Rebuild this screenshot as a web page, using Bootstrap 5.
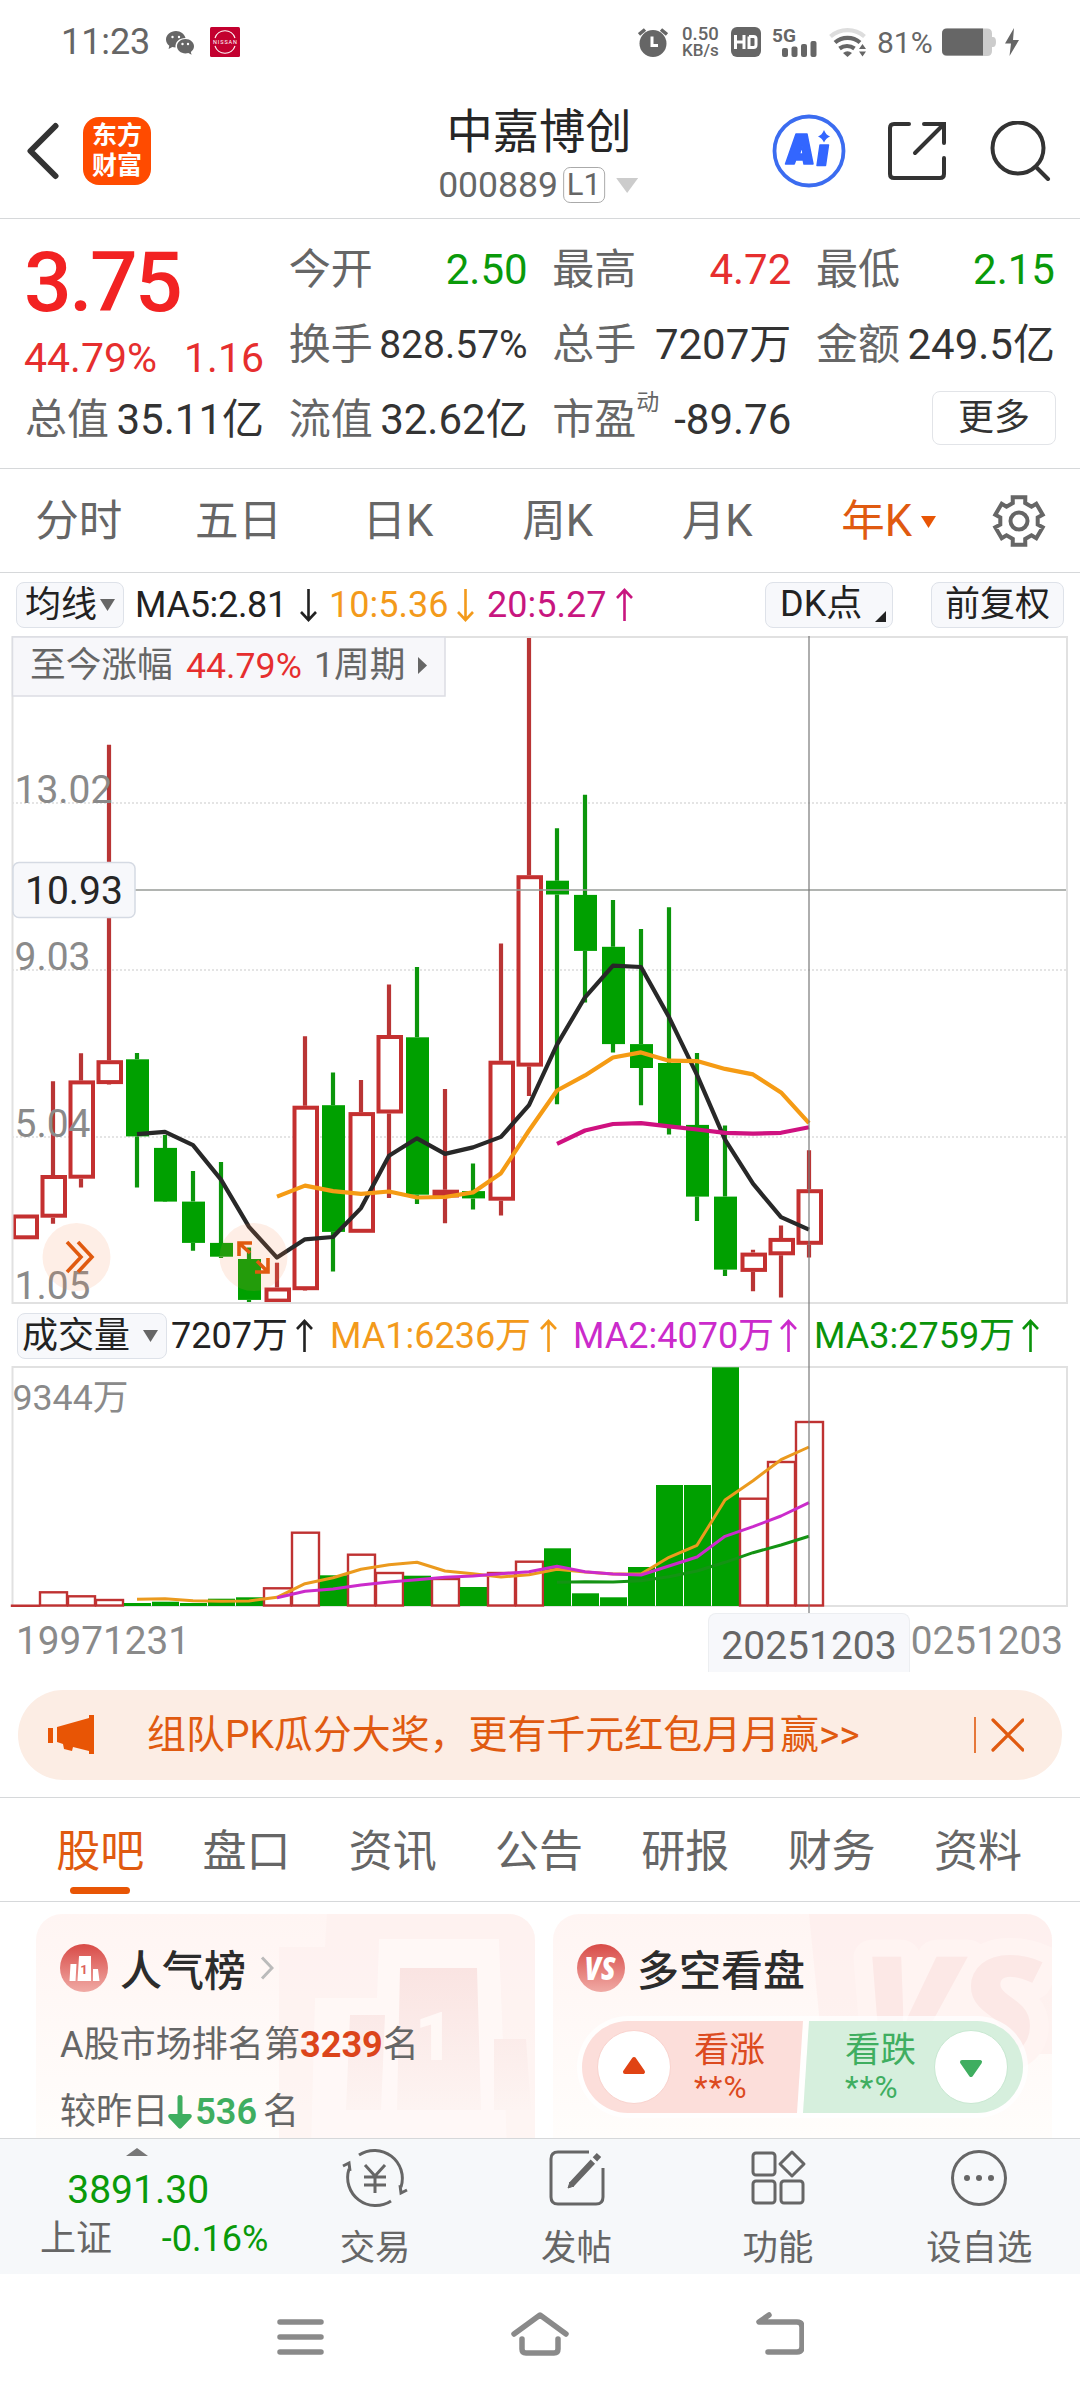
<!DOCTYPE html>
<html lang="zh-CN">
<head>
<meta charset="utf-8">
<meta name="viewport" content="width=device-width, initial-scale=1">
<title>中嘉博创 000889</title>
<link href="https://cdn.jsdelivr.net/npm/bootstrap@5.3.0/dist/css/bootstrap.min.css" rel="stylesheet">
<style>
:root{--ink:#333;--mute:#666;--dim:#8a8a8a;--up:#e62e2e;--down:#0a9a0a;--brand:#e05a10;--hair:#d6d8da}
body{font-family:Roboto,"Noto Sans CJK SC",sans-serif;color:var(--ink);background:#fff;width:1080px;height:2400px;overflow:hidden;line-height:1}
svg{display:block;flex:none}
.hair-b{border-bottom:1px solid var(--hair)}
.c-up{color:var(--up)}.c-down{color:var(--down)}.c-mute{color:var(--mute)}.c-brand{color:var(--brand)}
.statusbar{height:84px;padding:0 61px 0 61px;color:var(--mute)}
.clock{font-size:36px;width:105px;letter-spacing:-.1px}
.speed{width:49px;font-weight:500;font-size:18.500px;line-height:16px}
.speed div{height:16px}
.apphead{height:135px;padding:0 28px 0 26px}
.logo{width:68px;height:68px;border-radius:16px;background:#ff4b00;color:#fff;font-weight:700;font-size:25px;line-height:30px}
.stockhead{top:22px;margin-left:-1px}
.stockname{font-size:46.3px;line-height:52px;color:#262626}
.code{font-size:35.5px;color:var(--mute);line-height:38px}
.lvl{border:1.5px solid #aaa;border-radius:7px;width:42px;height:36px;font-size:31px;line-height:34px;text-align:center}
.quote{height:250px;padding:13px 25px 0;font-size:42px}
.qcol{width:239px}
.qrow{height:75px;padding-top:1px}
.price{height:100px;line-height:102px;font-size:84px;font-weight:500;letter-spacing:-2.6px;color:#f22222;margin-left:-1px}
.pct{height:50px;padding-top:2px;font-size:41px;margin-left:-1px}
.fit{font-size:39px}
.sup{font-size:23px;align-self:flex-start;margin-top:8px}
.more{width:124px;height:54px;border:1.5px solid #e2e4e8;border-radius:8px;font-size:36px;margin:-4px -1px 0 0}
.tabbar{height:104px;font-size:43.5px;color:var(--mute)}
.tabbar>a{width:159.6px;padding-top:2px;margin-left:-1px;margin-right:1px;text-align:center;color:inherit;text-decoration:none}
.tabbar>a.on{color:var(--brand)}
.tabbar .tri{display:inline-block;vertical-align:middle;margin:-4px -24px 0 9px}
.legend-row{height:63px;font-size:36px;padding-left:16px;color:#222}
.chip{background:#f7f8fb;border:1.5px solid #dee2e9;border-radius:8px;height:46px;font-size:36px;color:#222;white-space:nowrap;flex:none}
.legend-row span{white-space:nowrap;flex:none}
.stage{position:relative}
.cross-v{position:absolute;left:808px;top:63px;width:2px;height:978px;background:rgba(120,120,120,.6)}
.dates{height:83px;font-size:38.7px;color:var(--dim);padding:14px 17px 0 16px;line-height:40px}
.datepick{position:absolute;left:708px;top:1040px;width:202px;height:59px;background:#f7f8fb;border:1px solid #eceef1;border-bottom:0;border-radius:8px 8px 0 0;font-size:39px;color:var(--mute);line-height:64px;text-align:center}
.promo{height:90px;margin:0 18px;border-radius:45px;background:#fcede4;font-size:38.95px;padding:0 38px 0 30px}
.subtabs{height:105px;margin-top:17px;border-top:1px solid var(--hair);padding:0 28px 0 27px;font-size:44px;color:var(--mute)}
.subtabs>a{color:inherit;text-decoration:none;width:146.3px;height:103px;line-height:108px;text-align:center;position:relative}
.subtabs>a.on{color:var(--brand)}
.subtabs>a.on::after{content:"";position:absolute;left:43px;bottom:7px;width:60px;height:7px;border-radius:4px;background:#e85505}
.feed{height:236px;padding:12px 28px 0 36px;overflow:hidden;gap:18px}
.tile{width:499px;height:260px;border-radius:26px;background:linear-gradient(#fff5f3,#fffdfb 85%);position:relative;overflow:hidden;flex:none}
.tile>.art{position:absolute;left:0;top:0}
.tile>.inner{position:relative;padding:29px 24px}
.tile h2{font-size:42px;line-height:50px;font-weight:500;margin:0;padding-top:4px;height:50px;color:#2c2c2c}
.rank{font-size:36.1px;color:var(--mute);height:50px;line-height:51px;white-space:nowrap}
.rank b{font-weight:700}
.vote{position:absolute;left:29px;top:107px;width:441px;height:92px}
.vote .word{position:absolute;top:7px;font-size:35.5px;line-height:44px}
.vote .word small{display:block;font-size:31.5px;line-height:31px;letter-spacing:1.2px}
.dock{height:136px;background:#f6f8fa;border-top:1px solid var(--hair);color:var(--mute)}
.dock .cell{width:201.5px;font-size:35.4px}
.dock .cell svg{margin-top:7px}
.dock .cell div{line-height:40px;margin-top:18px}
.idx{width:274.5px;padding-top:9px}
.sysnav{height:126px;padding:37px 0 0}
</style>
</head>
<body>
<div class="statusbar d-flex align-items-center">
  <span class="clock">11:23</span>
  <svg width="28" height="25" viewBox="0 0 28 25" fill="#666"><path d="M10 1C4.500 1 0 4.700 0 9.500c0 2.600 1.300 4.800 3.300 6.300L2.600 19l3.700-1.900c1 .3 2 .4 3.200.4C9 12 13 8 19.500 8 18.500 4 14.600 1 10 1z"/><path d="M19.500 9c-4.800 0-8.500 3.300-8.500 7.200s3.700 7.200 8.500 7.200c1 0 2-.1 2.900-.4l3.200 1.700-.8-2.800c1.900-1.300 3.200-3.300 3.200-5.700 0-3.900-3.700-7.200-8.500-7.200z"/><g fill="#fff"><circle cx="6.500" cy="7" r="1.200"/><circle cx="13" cy="7" r="1.200"/><circle cx="16.500" cy="14" r="1.200"/><circle cx="22" cy="14" r="1.200"/></g></svg>
  <svg class="ms-3" width="30" height="30" viewBox="0 0 30 30"><rect width="30" height="30" rx="1.500" fill="#c3002f"/><g fill="none" stroke="#fff" stroke-width="1.100"><path d="M5 11a10.500 10.500 0 0 1 20 0M5 19a10.500 10.500 0 0 0 20 0"/></g><text x="15" y="17" font-size="5.500" fill="#fff" text-anchor="middle" textLength="24">NISSAN</text></svg>
  <div class="d-flex align-items-center ms-auto">
    <svg width="30" height="30" viewBox="0 0 30 30" fill="#666"><circle cx="15" cy="16.500" r="13.500"/><path d="M1 7.500 7 2.500M29 7.500 23 2.500" stroke="#666" stroke-width="3.500"/><path d="M14 9.500v9h6" fill="none" stroke="#fff" stroke-width="3"/></svg>
    <div class="speed" style="margin-left:14px"><div>0.50</div><div style="font-size:17px">KB/s</div></div>
    <svg width="30" height="30" viewBox="0 0 30 30"><rect width="30" height="30" rx="6" fill="#666"/><path d="M4.500 8v14M13 8v14M4.500 15H13M18 9.500v11h4.500q2.500 0 2.500-2.500v-6q0-2.500-2.500-2.500H18" fill="none" stroke="#fff" stroke-width="3"/></svg>
    <svg width="46" height="30" viewBox="0 0 46 30" style="margin-left:11px;overflow:visible" fill="#666"><text x="0" y="14.500" font-size="19" font-weight="700" textLength="24">5G</text><rect x="10" y="21" width="6" height="9" rx="2"/><rect x="19.500" y="19.500" width="6" height="10.500" rx="2"/><rect x="29" y="17" width="6" height="13" rx="2"/><rect x="38.500" y="14" width="6" height="16" rx="2"/></svg>
    <svg width="38" height="30" viewBox="0 0 38 30" style="margin-left:11px" fill="none" stroke-width="4.200"><path d="M1.500 9.500a26 26 0 0 1 34 0" stroke="#ddd"/><path d="M6 15.500a19 19 0 0 1 25 0M10.500 21.500a13 13 0 0 1 15 0" stroke="#666"/><path d="M14 26q4.500-3.500 9 0l-4.500 4z" fill="#666"/><path d="M30 22l3.500-5 3.500 5zM30 24.500l3.500 5 3.500-5z" fill="#666"/></svg>
    <span style="font-size:30px;margin-left:10px;width:65px;padding-top:1px">81%</span>
    <svg width="54" height="28" viewBox="0 0 54 28"><path d="M5 .5h40q5 0 5 5V9h1q3 0 3 5t-3 5h-1v4q0 5-5 5H5q-5 0-5-5V5.500q0-5 5-5z" fill="#ccc"/><path d="M5 .5h36v27H5q-5 0-5-5v-17q0-5 5-5z" fill="#666"/></svg>
    <svg class="ms-2" width="16" height="28" viewBox="0 0 16 28" style="margin-right:-1px"><path d="M10 0 1 15.500h6L5.500 28 15 12H9z" fill="#666"/></svg>
  </div>
</div>

<header class="apphead hair-b d-flex align-items-center position-relative">
  <svg width="34" height="58" viewBox="0 0 34 58"><path d="M29.500 4 4.500 29l25 25" fill="none" stroke="#333" stroke-width="6" stroke-linecap="round" stroke-linejoin="round"/></svg>
  <div class="logo d-flex flex-column align-items-center justify-content-center" style="margin-left:23px"><div>东方</div><div>财富</div></div>
  <div class="stockhead position-absolute start-50 translate-middle-x text-center">
    <div class="stockname">中嘉博创</div>
    <div class="code d-flex align-items-center" style="margin-top:8px;margin-left:-2px"><span>000889</span><span class="lvl" style="margin-left:5px">L1</span><svg width="22" height="15" style="margin-left:11px"><path d="M0 0h22L11 15z" fill="#ccc"/></svg></div>
  </div>
  <div class="d-flex align-items-center ms-auto">
    <svg width="74" height="74" viewBox="0 0 74 74"><circle cx="37" cy="37" r="34.500" fill="none" stroke="#3b6cf0" stroke-width="3.800"/><path d="M24 20h11l6 30h-9l-.8-4h-7.500l-1.500 4H13.500zM27.500 40h3.500l-1-8zM48 31h8.500l-3 20.500h-8.500z" fill="#3366ff" stroke="#3366ff" stroke-width="1.500" stroke-linejoin="round"/><path d="M52 16q2 5 6 6.500-4 1.500-6 6-2-4.500-6-6 4-1.500 6-6.500z" fill="#3366ff"/></svg>
    <svg width="60" height="60" viewBox="0 0 60 60" style="margin-left:41px" fill="none" stroke="#333" stroke-width="4" stroke-linecap="round"><path d="M22 3H7q-4 0-4 4v46q0 4 4 4h46q4 0 4-4V37M37 3h20v19M56 4 28 32"/></svg>
    <svg width="62" height="60" viewBox="0 0 62 60" style="margin-left:42px;margin-right:1px" fill="none" stroke="#333" stroke-width="4" stroke-linecap="round"><circle cx="29" cy="27" r="25.500"/><path d="M47 46 59 58"/></svg>
  </div>
</header>

<section class="quote hair-b d-flex justify-content-between">
  <div class="qcol">
    <div class="price">3.75</div>
    <div class="pct c-up d-flex justify-content-between align-items-center"><span>44.79%</span><span>1.16</span></div>
    <div class="qrow d-flex justify-content-between align-items-center"><span class="c-mute">总值</span><span>35.11亿</span></div>
  </div>
  <div class="qcol">
    <div class="qrow d-flex justify-content-between align-items-center"><span class="c-mute">今开</span><span class="c-down">2.50</span></div>
    <div class="qrow d-flex justify-content-between align-items-center"><span class="c-mute">换手</span><span class="fit">828.57%</span></div>
    <div class="qrow d-flex justify-content-between align-items-center"><span class="c-mute">流值</span><span>32.62亿</span></div>
  </div>
  <div class="qcol">
    <div class="qrow d-flex justify-content-between align-items-center"><span class="c-mute">最高</span><span class="c-up">4.72</span></div>
    <div class="qrow d-flex justify-content-between align-items-center"><span class="c-mute">总手</span><span>7207万</span></div>
    <div class="qrow d-flex align-items-center"><span class="c-mute">市盈</span><span class="sup c-mute">动</span><span class="ms-auto">-89.76</span></div>
  </div>
  <div class="qcol">
    <div class="qrow d-flex justify-content-between align-items-center"><span class="c-mute">最低</span><span class="c-down">2.15</span></div>
    <div class="qrow d-flex justify-content-between align-items-center"><span class="c-mute">金额</span><span>249.5亿</span></div>
    <div class="qrow d-flex justify-content-end align-items-center"><span class="more d-flex align-items-center justify-content-center">更多</span></div>
  </div>
</section>

<nav class="tabbar hair-b d-flex align-items-center">
  <a>分时</a><a>五日</a><a>日K</a><a>周K</a><a>月K</a><a class="on">年K<svg class="tri" width="15" height="12"><path d="M0 0h15L7.500 12z" fill="#e85505"/></svg></a>
  <svg width="54" height="54" viewBox="-27 -27 54 54" style="margin-left:34px" fill="none" stroke="#666" stroke-width="4"><path id="gear" stroke-linejoin="miter"/><circle r="8.500"/></svg>
</nav>

<div class="stage">
  <div class="legend-row d-flex align-items-center">
    <span class="chip d-flex align-items-center" style="width:108px;padding-left:8px">均线<svg width="15" height="12" style="margin-left:3px"><path d="M0 0h15L7.500 12z" fill="#666"/></svg></span>
    <span style="margin-left:11px;width:165px;letter-spacing:-.3px">MA5:2.81</span><svg width="17" height="34" viewBox="0 0 17 34"><use href="#dn"/></svg>
    <span style="margin-left:12px;width:128px;color:#f39a1b">10:5.36</span><svg width="17" height="34" viewBox="0 0 17 34" color="#f39a1b"><use href="#dn"/></svg>
    <span style="margin-left:13px;width:129px;color:#c8167f">20:5.27</span><svg width="17" height="34" viewBox="0 0 17 34" color="#c8167f"><use href="#upa"/></svg>
    <span class="chip position-relative" style="width:128px;margin-left:132px;padding-left:14px;line-height:43px">DK点<svg class="position-absolute" style="right:6px;bottom:5px" width="11" height="11"><path d="M11 0v11H0z" fill="#222"/></svg></span>
    <span class="chip text-center" style="width:133px;margin-left:38px;line-height:44px;font-size:35px">前复权</span>
  </div>

  <svg id="kline" width="1080" height="668" viewBox="0 0 1080 668">
    <g id="kgrid" stroke="#dcdcdc" stroke-width="1.500" stroke-dasharray="2 2"><path d="M12 167H1067M12 334H1067M12 501H1067"/></g>
    <g id="candles"></g>
    <g fill="none" stroke-width="4.200" stroke-linejoin="round"><polyline id="ma5" stroke="#282828"/><polyline id="ma10" stroke="#f59b14"/><polyline id="ma20" stroke="#cf1180"/></g>
    <g font-size="39" fill="#8a8a8a"><text x="14.500" y="167">13.02</text><text x="14.500" y="334">9.03</text><text x="14.500" y="501">5.04</text><text x="14.500" y="663">1.05</text></g>
    <path d="M135 254H1067" stroke="#979b97" stroke-width="1.600"/>
    <rect x="12.500" y="1" width="1054.500" height="666" fill="none" stroke="#e1e1e1" stroke-width="2"/>
    <rect x="13" y="226.500" width="122" height="55" rx="6" fill="#f7f8fb" stroke="#d5dae3" stroke-width="1.500"/>
    <text x="25" y="267.500" font-size="39" fill="#262626">10.93</text>
    <g><rect x="12.500" y="1" width="432.500" height="59" fill="#f7f7fa" stroke="#dcdde3" stroke-width="1.500"/><text x="30" y="41" font-size="35.700" fill="#666">至今涨幅</text><text x="186" y="41.500" font-size="35.700" fill="#e62e2e">44.79%</text><text x="314" y="41" font-size="35.700" fill="#666">1周期</text><path d="M418 21v17l9-8.500z" fill="#666"/></g>
    <g fill="none" stroke="#e05a10" stroke-width="3.600"><circle cx="76.500" cy="621" r="34" fill="#fb8a50" fill-opacity=".14" stroke="none"/><path d="M67 606l14 15-14 15M78 606l14 15-14 15"/><circle cx="253.500" cy="621" r="34" fill="#fb8a50" fill-opacity=".14" stroke="none"/><path d="M239 620v-13h13M239 607l11 10M268 622v14h-13M268 636l-11-11"/></g>
  </svg>

  <div class="legend-row d-flex align-items-center" style="height:62px;padding:2px 0 0 17px">
    <span class="chip d-flex align-items-center" style="width:150px;padding-left:4px">成交量<svg width="15" height="12" style="margin-left:13px"><path d="M0 0h15L7.500 12z" fill="#666"/></svg></span>
    <span style="margin-left:4px;width:125px">7207万</span><svg width="17" height="36" viewBox="0 0 17 34"><use href="#upa"/></svg>
    <span style="margin-left:17px;width:210px;color:#f39a1b">MA1:6236万</span><svg width="17" height="36" viewBox="0 0 17 34" color="#f39a1b"><use href="#upa"/></svg>
    <span style="margin-left:16px;width:207px;color:#cb2bcb">MA2:4070万</span><svg width="17" height="36" viewBox="0 0 17 34" color="#cb2bcb"><use href="#upa"/></svg>
    <span style="margin-left:17px;width:208px;color:#0a930a">MA3:2759万</span><svg width="17" height="36" viewBox="0 0 17 34" color="#0a930a"><use href="#upa"/></svg>
  </div>

  <svg id="volume" width="1080" height="241" viewBox="0 0 1080 241">
    <rect x="12.500" y="1" width="1054.500" height="239" fill="none" stroke="#e1e1e1" stroke-width="2"/>
    <text x="12.500" y="43.500" font-size="35.700" fill="#8a8a8a">9344万</text>
    <g id="bars"></g>
    <g fill="none" stroke-width="3" stroke-linejoin="round"><polyline id="v3" stroke="#149314"/><polyline id="v1" stroke="#eb9a1e"/><polyline id="v2" stroke="#cb2bcb"/></g>
  </svg>
  <div class="dates d-flex justify-content-between"><span>19971231</span><span>20251203</span></div>
  <div class="cross-v"></div>
  <div class="datepick">20251203</div>
</div>

<div class="promo d-flex align-items-center c-brand">
  <svg width="46" height="40" viewBox="0 0 46 40" fill="#e85505"><path d="M0 13h5v15H0zM9 12 41 3V0h5v39h-5v-3l-16-4-1 4-8-2-1-5-6-2z"/></svg>
  <span class="text-nowrap" style="margin-left:53px">组队PK瓜分大奖，更有千元红包月月赢&gt;&gt;</span>
  <svg class="ms-auto" width="50" height="36" viewBox="0 0 50 36" stroke="#e05a10"><path d="M1 0v36" stroke-width="1.600"/><path d="M19 3l30 30M49 3 19 33" stroke-width="3.200" stroke-linecap="round"/></svg>
</div>

<nav class="subtabs hair-b d-flex"><a class="on">股吧</a><a>盘口</a><a>资讯</a><a>公告</a><a>研报</a><a>财务</a><a>资料</a></nav>

<section class="feed d-flex">
  <div class="tile">
    <svg class="art" width="499" height="260" viewBox="0 0 499 260">
      <path d="M291 0H499V232H243V33h46z" fill="#fdeeec" opacity=".55"/>
      <path d="M343 25h120l8 207H275l4-148h62z" fill="#fff9f7" opacity=".8"/>
      <path d="M364 54h77l4 142H361zM314 101h35l-4 95h-35zM458 125h32l5 71h-37z" fill="url(#podium)"/>
      <text x="379" y="146" font-size="66" font-weight="900" fill="#fff8f6">1</text>
    </svg>
    <div class="inner">
      <div class="d-flex align-items-center">
        <svg width="48" height="48" viewBox="0 0 48 48"><circle cx="24" cy="24" r="24" fill="url(#badge)"/><path d="M19 12h12v25H17.500zM10.500 20h6l-1 17h-6zM33 25h5l1.500 12H33z" fill="#fff"/><text x="24" y="30" font-size="13" font-weight="700" text-anchor="middle" fill="#dd625c">1</text></svg>
        <h2 style="margin-left:12px">人气榜</h2>
        <svg width="14" height="24" viewBox="0 0 14 24" style="margin-left:14px"><path d="M2 1.500 12 12 2 22.500" fill="none" stroke="#bbb" stroke-width="3"/></svg>
      </div>
      <div class="rank" style="margin-top:27px">A股市场排名第<b style="color:#dc451b">3239</b>名</div>
      <div class="rank d-flex align-items-center" style="margin-top:17px">较昨日<svg width="24" height="34" viewBox="0 0 24 34" style="margin:0 3px 0 0"><path d="M9.500 2q0-2 2.500-2t2.500 2v17H22q3 1 1 4L13.500 33q-1.500 1.500-3 0L1 23q-2-3 1-4h7.500z" fill="#3fae60"/></svg><b style="color:#3fae60;font-weight:600">536</b><span style="margin-left:6px">名</span></div>
    </div>
  </div>
  <div class="tile">
    <svg class="art" width="499" height="260" viewBox="0 0 499 260">
      <path d="M256 0H499V140H270z" fill="#fdeceb" opacity=".6"/>
      <g font-family="Open Sans,sans-serif" font-weight="800" font-style="italic" font-size="140"><text x="308" y="143" fill="#fce8e6" stroke="#fff4f2" stroke-width="34" paint-order="stroke" stroke-linejoin="round" textLength="180" lengthAdjust="spacingAndGlyphs">VS</text></g>
    </svg>
    <div class="inner d-flex align-items-center">
      <svg width="48" height="48" viewBox="0 0 48 48"><circle cx="24" cy="24" r="24" fill="url(#badge)"/><text x="23" y="35.500" font-family="Open Sans,sans-serif" font-size="31" font-weight="800" font-style="italic" text-anchor="middle" fill="#fff" textLength="31" lengthAdjust="spacingAndGlyphs">VS</text></svg>
      <h2 style="margin-left:12px">多空看盘</h2>
    </div>
    <div class="vote">
      <svg width="441" height="92" viewBox="0 0 441 92" overflow="visible"><rect x="-5" y="-5" width="451" height="102" rx="51" fill="#fff" opacity=".75"/><path d="M46 0h175l-6 92H46A46 46 0 0 1 46 0z" fill="#fcdeda"/><path d="M227 0h168a46 46 0 0 1 0 92H221z" fill="#d6efdd"/><circle cx="52" cy="46" r="36.500" fill="#fff" stroke="#f9d3ce"/><circle cx="389" cy="46" r="36.500" fill="#fff" stroke="#c8e8d1"/><path d="M52 38 61 51H43z" fill="#e04314" stroke="#e04314" stroke-width="4" stroke-linejoin="round"/><path d="M389 54l9-13h-18z" fill="#3fae60" stroke="#3fae60" stroke-width="4" stroke-linejoin="round"/></svg>
      <div class="word" style="left:112px;color:#dc4a20">看涨<small>**%</small></div>
      <div class="word" style="left:263px;color:#3fae60">看跌<small>**%</small></div>
    </div>
  </div>
</section>

<footer class="dock d-flex">
  <div class="idx">
    <svg class="mx-auto" width="22" height="8"><path d="M0 8 11 0l11 8z" fill="#777"/></svg>
    <div class="c-down text-center" style="font-size:39px;line-height:44px;margin-top:12px;padding-left:2px">3891.30</div>
    <div class="d-flex justify-content-between align-items-center" style="font-size:36px;line-height:40px;margin-top:7px;padding:0 6px 0 40px"><span>上证</span><span class="c-down">-0.16%</span></div>
  </div>
  <div class="cell d-flex flex-column align-items-center"><svg width="66" height="64" viewBox="-33 -32 66 64" fill="none" stroke="#666" stroke-width="3"><path d="M-16-23A28 28 0 0 1 26 9M16 23A28 28 0 0 1-26-9M-32-12l6-3 1 8M32 12l-6 3-1-8M-10-13 0-2l10-11M0-2v17M-11-1h22M-11 7h22"/></svg><div>交易</div></div>
  <div class="cell d-flex flex-column align-items-center"><svg width="66" height="64" viewBox="-34 -32 66 64" fill="none" stroke="#666" stroke-width="3"><path d="M12-26h-31q-7 0-7 7v38q0 7 7 7h38q7 0 7-7V-10"/><path d="M22-23-6 7" stroke-width="6" stroke-dasharray="6 3 60"/><path d="M-9 10l2-6 4 4z" fill="#666" stroke-width="1"/></svg><div>发帖</div></div>
  <div class="cell d-flex flex-column align-items-center"><svg width="66" height="64" viewBox="-33 -32 66 64" fill="none" stroke="#666" stroke-width="3" stroke-linejoin="round"><rect x="-25" y="-25" width="22" height="22" rx="3"/><rect x="-25" y="3" width="22" height="22" rx="3"/><rect x="3" y="3" width="22" height="22" rx="3"/><path d="M14-26 26-14 14-2 2-14z"/></svg><div>功能</div></div>
  <div class="cell d-flex flex-column align-items-center"><svg width="66" height="64" viewBox="-33 -32 66 64"><circle r="26.500" fill="none" stroke="#666" stroke-width="3"/><g fill="#666"><circle cx="-12" r="3"/><circle r="3"/><circle cx="12" r="3"/></g></svg><div>设自选</div></div>
</footer>

<div class="sysnav d-flex justify-content-center">
  <svg width="528" height="46" viewBox="276 2311 528 46" fill="none" stroke="#8a8a8a" stroke-width="5.500" stroke-linecap="round" stroke-linejoin="round"><path d="M280 2322h41M280 2337h41M280 2352h41M514 2334l26-19 26 19M522 2339v10q0 4 4 4h28q4 0 4-4v-10M769 2315l-10 7h38q5 0 5 5v20q0 5-5 5h-29"/></svg>
</div>

<svg width="0" height="0" class="position-absolute"><defs>
  <g id="dn" fill="none" stroke="currentColor" stroke-width="2.600"><path d="M8.500 1v31M1 24l7.500 8 7.500-8"/></g>
  <g id="upa" fill="none" stroke="currentColor" stroke-width="2.600"><path d="M8.500 33V2M1 10l7.500-8 7.500 8"/></g>
  <linearGradient id="badge" x2="0" y2="1"><stop stop-color="#d84b47"/><stop offset="1" stop-color="#f0aaa5"/></linearGradient>
  <linearGradient id="podium" x2="0" y2="1"><stop stop-color="#fae4e2"/><stop offset="1" stop-color="#fdf4f2"/></linearGradient>
</defs></svg>

<script src="https://cdn.jsdelivr.net/npm/bootstrap@5.3.0/dist/js/bootstrap.bundle.min.js"></script>
<script>
const X = i => 25 + 28 * i;
const Y = v => +(v / 2.178 - 6).toFixed(1);
const V = v => +(v / 3 - 66).toFixed(1);
const line = (id, start, f, vals) =>
  document.getElementById(id).setAttribute('points', vals.map((v, k) => X(start + k) + ',' + f(v)).join(' '));

// [rising, high, body top, body bottom, low] for each year
const K = [[1,1273,1273,1327,1327],[1,983,1187,1280,1293],[1,922,981,1195,1214],[1,250,937,989,990],[0,921,935,1103,1214],
[0,1100,1128,1245,1246],[0,1178,1245,1335,1352],[0,1159,1335,1365,1368],[0,1345,1370,1459,1467],[1,1378,1432,1465,1465],
[1,885,1036,1438,1439],[0,964,1035,1311,1397],[1,980,1050,1313,1313],[1,772,882,1053,1237],[0,734,887,1230,1250],
[1,1000,1219,1236,1292],[0,1162,1222,1238,1262],[1,683,938,1243,1275],[1,13,534,951,1015],[0,432,546,576,1033],
[0,359,577,699,811],[0,588,690,902,920],[0,651,902,954,1035],[0,604,943,1080,1099],[0,921,1078,1234,1287],
[0,1079,1234,1393,1407],[1,1350,1356,1398,1440],[1,1297,1324,1362,1454],[1,1133,1218,1339,1367]];
document.getElementById('candles').innerHTML = K.map(([up, h, t, b, l], i) => {
  const x = X(i), c = up ? '#c43030' : '#00a000';
  const wick = `<path d="M${x} ${Y(h)}V${Y(t)}M${x} ${Y(b)}V${Y(l)}" stroke="${up ? '#b93535' : '#0b960b'}" stroke-width="4.200"/>`;
  const left = i ? x - 10.5 : 14;
  return wick + (up
    ? `<rect x="${left}" y="${Y(t) + 2}" width="${x + 12 - left}" height="${Math.max(Y(b) - Y(t) - 4, 2)}" fill="#fff" stroke="${c}" stroke-width="4"/>`
    : `<rect x="${x - 11}" y="${Y(t)}" width="23" height="${Y(b) - Y(t)}" fill="${c}"/>`);
}).join('');
line('ma5', 4, Y, [1098,1093,1122,1197,1300,1367,1327,1322,1259,1145,1107,1141,1127,1104,1035,903,800,731,734,843,969,1110,1206,1279,1306]);
line('ma10', 9, Y, [1234,1210,1222,1228,1223,1236,1235,1225,1183,1090,1003,970,931,920,938,939,956,968,1007,1074]);
line('ma20', 19, Y, [1119,1090,1076,1074,1081,1088,1095,1097,1095,1083]);

const T = [914,874,886,897,909,905,909,896,892,862,695,826,761,816,827,834,861,816,782,745,880,892,801,555,555,202,593,483,363];
document.getElementById('bars').innerHTML = T.map((t, i) => {
  const x = X(i), y = V(t);
  return K[i][0]
    ? `<rect x="${x - 13}" y="${y + 1}" width="27" height="${Math.max(238.5 - y, .5)}" fill="#fff" stroke="#bf3232" stroke-width="2.400"/>`
    : `<rect x="${x - 13}" y="${y}" width="27" height="${240 - y}" fill="#00a000"/>`;
}).join('');
line('v1', 4, V, [898,896,902,904,903,892,851,833,808,794,787,813,821,831,824,808,816,822,822,772,736,600,542,479,441]);
line('v2', 9, V, [893,874,867,855,846,839,832,828,821,815,799,815,822,825,798,771,709,680,648,608]);
line('v3', 19, V, [847,845,846,842,830,813,787,758,735,709]);

// six-toothed gear outline
let d = '';
for (let k = 0; k < 6; k++) {
  [[-15, 24.5], [15, 24.5], [19, 19], [41, 19]].forEach(([a, r]) => {
    const q = (k * 60 + a - 90) * Math.PI / 180;
    d += (d ? 'L' : 'M') + (r * Math.cos(q)).toFixed(1) + ' ' + (r * Math.sin(q)).toFixed(1);
  });
}
document.getElementById('gear').setAttribute('d', d + 'Z');
</script>
</body>
</html>
